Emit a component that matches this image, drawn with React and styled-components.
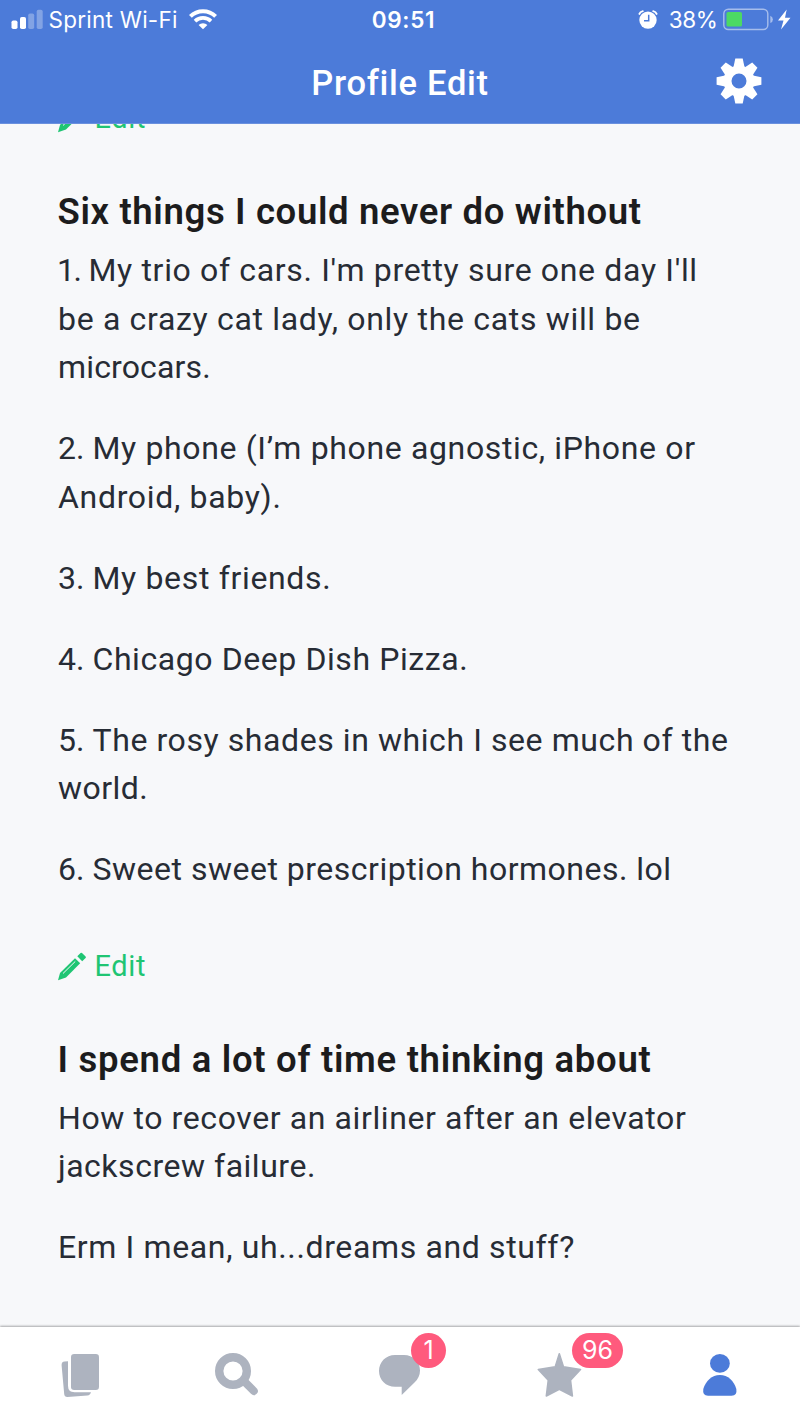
import React from "react"
import styled, { createGlobalStyle } from "styled-components"

const colors = {
  blue: "#4c7bd9",
  page: "#f7f8fa",
  heading: "#1c1c1d",
  text: "#272c35",
  green: "#1fc573",
  grey: "#adb3bf",
  pink: "#ff5a7d",
}

const GlobalStyle = createGlobalStyle`
  * {
    box-sizing: border-box;
  }
  body {
    margin: 0;
    background: ${colors.page};
    font-family: Roboto, "Liberation Sans", sans-serif;
  }
  svg {
    display: block;
    flex: none;
    overflow: visible;
  }
`

const Screen = styled.div`
  display: flex;
  flex-direction: column;
  width: 800px;
  height: 1422px;
  overflow: hidden;
`

const Header = styled.header`
  flex: none;
  height: 124px;
  background: ${colors.blue};
  border-bottom: 1px solid #6a90de;
  color: #fff;
`

const StatusBar = styled.div`
  display: grid;
  grid-template-columns: 1fr auto 1fr;
  align-items: center;
  height: 40px;
  padding: 0 8px 0 11px;
  font-family: Inter, "Liberation Sans", sans-serif;
  font-size: 22.5px;
  line-height: 40px;
`

const StatusGroup = styled.div`
  display: flex;
  align-items: center;
  justify-content: ${props => (props.end ? "flex-end" : "flex-start")};
`

const Carrier = styled.span`
  margin: 0 11px 0 5.5px;
  letter-spacing: 0.25px;
`

const Clock = styled.span`
  padding-left: 4px;
  font-weight: 560;
  letter-spacing: 0.7px;
`

const Percent = styled.span`
  margin: 0 5.5px 0 11px;
  letter-spacing: -0.4px;
`

const TitleBar = styled.div`
  display: grid;
  grid-template-columns: 1fr auto 1fr;
  align-items: center;
  height: 83px;
  padding: 0 38px;
`

const Title = styled.h1`
  grid-column: 2;
  margin: 0;
  padding-top: 2px;
  font-size: 34.5px;
  font-weight: 550;
  line-height: 82px;
  letter-spacing: 0.7px;
`

const Settings = styled.div`
  justify-self: end;
  padding-bottom: 2px;
`

const Content = styled.main`
  flex: 1;
  min-height: 0;
  overflow: hidden;
  padding-left: 58px;
`

const EditLink = styled.div`
  display: flex;
  align-items: center;
  height: 40px;
  margin-top: ${props => props.offset}px;
  color: ${colors.green};
  font-size: 29px;
  line-height: 40px;
  letter-spacing: 0.6px;
  span {
    margin-left: 8.5px;
  }
`

const Heading = styled.h2`
  margin: 50px 0 10px -0.5px;
  color: ${colors.heading};
  font-size: 36.5px;
  font-weight: 600;
  line-height: 48px;
  white-space: nowrap;
  letter-spacing: ${props => props.tracking}px;
`

const Paragraph = styled.p`
  margin: 0;
  color: ${colors.text};
  font-size: 32px;
  line-height: 48.5px;
  & + & {
    margin-top: 32.5px;
  }
`

const Line = styled.span`
  display: block;
  white-space: nowrap;
  letter-spacing: ${props => props.tracking}px;
`

// "1." to "6." sit closer to the text than a full space
const Numeral = styled.span`
  display: inline-block;
  width: ${props => (props.narrow ? 31.5 : 34.5)}px;
  margin-left: ${props => (props.narrow ? -1 : 0)}px;
  letter-spacing: ${props => (props.narrow ? -1.5 : 0)}px;
`

const TabBar = styled.nav`
  flex: none;
  display: grid;
  grid-template-columns: repeat(5, 1fr);
  align-items: center;
  justify-items: center;
  height: 95px;
  padding-top: 1px;
  background: #fff;
  box-shadow: 0 -1px 2px rgba(0, 0, 0, 0.32);
  z-index: 1;
`

const Tab = styled.div`
  position: relative;
  color: ${props => (props.active ? colors.blue : colors.grey)};
`

const Badge = styled.span`
  position: absolute;
  top: -18px;
  left: ${props => (props.wide ? 36 : 35)}px;
  height: 35px;
  min-width: 35px;
  padding: 0 ${props => (props.wide ? 10 : 0)}px;
  border-radius: 18px;
  background: ${colors.pink};
  color: #fff;
  font-family: Inter, "Liberation Sans", sans-serif;
  font-size: 25px;
  font-weight: 400;
  line-height: 35px;
  text-align: center;
`

const SignalIcon = () => (
  <svg width="32" height="20" viewBox="0 0 32 20" fill="#fff">
    <rect x="0.5" y="10.5" width="6" height="8.5" rx="1.8" />
    <rect x="9" y="7" width="6" height="12" rx="1.8" />
    <rect x="17.2" y="3.5" width="6" height="15.5" rx="1.8" opacity="0.3" />
    <rect x="25.7" y="-0.2" width="6" height="19.2" rx="1.8" opacity="0.3" />
  </svg>
)

const WifiIcon = () => (
  <svg width="28" height="20" viewBox="0 0 28 20" fill="none">
    <path d="M1.4 6.4a18 18 0 0 1 25.2 0" stroke="#fff" strokeWidth="4" />
    <path d="M6 11.1a11.5 11.5 0 0 1 16 0" stroke="#fff" strokeWidth="3.6" />
    <path d="M9.6 15a6.3 6.3 0 0 1 8.8 0L14 19.3z" fill="#fff" />
  </svg>
)

const AlarmIcon = () => (
  <svg width="20" height="20" viewBox="0 0 20 20" fill="none">
    <circle cx="10" cy="10.1" r="8.7" fill="#fff" />
    <path
      d="M1.4 3.9Q2.2 1.7 4.8 1.1M18.6 3.9Q17.8 1.7 15.2 1.1"
      stroke="#fff"
      strokeWidth="1.9"
      strokeLinecap="round"
    />
    <path d="M10.7 4.7v6H6" stroke={colors.blue} strokeWidth="1.5" />
  </svg>
)

const BatteryIcon = () => (
  <svg width="53" height="22" viewBox="0 0 53 22">
    <rect
      x="0.8"
      y="0.3"
      width="44"
      height="20.2"
      rx="4.5"
      fill="none"
      stroke="#fff"
      strokeOpacity="0.5"
      strokeWidth="1.4"
    />
    <rect x="3.5" y="3" width="15.5" height="14.6" rx="1.6" fill="#4cd964" />
    <path d="M47.3 6.7q2.6 1 2.6 3.7t-2.6 3.7z" fill="#fff" opacity="0.5" />
  </svg>
)

const BoltIcon = () => (
  <svg width="16" height="22" viewBox="0 0 16 22" fill="#fff">
    <path d="M10.7.5 2 11.6h5.5L5 20.5l9.500-11.700H9z" />
  </svg>
)

const GearIcon = () => (
  <svg width="46" height="46" viewBox="-23 -23 46 46" fill="#fff">
    {[0, 45, 90, 135, 180, 225, 270, 315].map(angle => (
      <path
        key={angle}
        d="M-3.7-22.4h7.4L5.5-14h-11z"
        transform={`rotate(${angle})`}
      />
    ))}
    <circle r="11.5" fill="none" stroke="#fff" strokeWidth="8" />
  </svg>
)

const PencilIcon = () => (
  <svg width="28" height="28" viewBox="0 0 28 28" fill="currentColor">
    <path d="M22.6 1q.7-.7 1.4 0l3.6 3.5q.7.7 0 1.4L24.2 9.2 19.3 4.3z" />
    <path d="M17 6.200l5.200 5.100L8 25.600 0 28.200 2 20.900z" />
    <path
      d="M5.3 21.2 17 9.7"
      stroke={colors.page}
      strokeWidth="1"
      strokeLinecap="round"
    />
  </svg>
)

const TabIcon = ({ children }) => (
  <svg width="48" height="48" viewBox="0 0 48 48" fill="currentColor">
    {children}
  </svg>
)

const CardsIcon = () => (
  <TabIcon>
    <rect x="15" y="3" width="28" height="36" rx="3.2" />
    <path d="M12 10.3v24.5q0 6.5 6.5 6.5H35q-.8 3-3.6 3.2L11.4 46q-3 0-3.2-3L5.6 14.2q-.2-3.4 3-3.7z" />
  </TabIcon>
)

const SearchIcon = () => (
  <TabIcon>
    <g fill="none" stroke="currentColor" strokeLinecap="round">
      <circle cx="17" cy="20" r="13.8" strokeWidth="8.4" />
      <path d="M29 31.2l8.8 8.8" strokeWidth="8" />
    </g>
  </TabIcon>
)

const ChatIcon = () => (
  <TabIcon>
    <path d="M19 4h9c9 0 16 6.6 16 15.5 0 5-2 8.6-5.5 12L25.7 43.9v-8.2H19C10 35.700 3 28.8 3 19.900S10 4 19 4z" />
  </TabIcon>
)

const StarIcon = () => (
  <TabIcon>
    <path
      d="M23.3 2.8 27.5 15.9 44.5 18.5 34.5 29.1 36.4 45 23.3 38.2 10.3 45 12.3 29.1 2.3 18.5 19.2 15.9z"
      stroke="currentColor"
      strokeWidth="1.6"
      strokeLinejoin="round"
    />
  </TabIcon>
)

const PersonIcon = () => (
  <TabIcon>
    <ellipse cx="23.9" cy="12.4" rx="9.9" ry="9.3" />
    <path d="M23.9 24C32 24 38 30 40.3 38q1.2 6.7-4.8 6.7H12q-5.7 0-4.7-6.7C9.8 30 15.8 24 23.9 24z" />
  </TabIcon>
)

// each line is [text, letter spacing]
const sections = [
  {
    title: "Six things I could never do without",
    tracking: 0.65,
    paragraphs: [
      [
        ["1. My trio of cars. I'm pretty sure one day I'll", 0.66],
        ["be a crazy cat lady, only the cats will be", 0.68],
        ["microcars.", 0.15],
      ],
      [
        ["2. My phone (I’m phone agnostic, iPhone or", 0.64],
        ["Android, baby).", 0.68],
      ],
      [["3. My best friends.", 0.66]],
      [["4. Chicago Deep Dish Pizza.", 0.58]],
      [
        ["5. The rosy shades in which I see much of the", 0.58],
        ["world.", 0.45],
      ],
      [["6. Sweet sweet prescription hormones. lol", 0.5]],
    ],
    editable: true,
  },
  {
    title: "I spend a lot of time thinking about",
    tracking: 0.71,
    paragraphs: [
      [
        ["How to recover an airliner after an elevator", 0.6],
        ["jackscrew failure.", 0.52],
      ],
      [["Erm I mean, uh...dreams and stuff?", 0.64]],
    ],
  },
]

const tabs = [
  { name: "cards", Icon: CardsIcon },
  { name: "search", Icon: SearchIcon },
  { name: "messages", Icon: ChatIcon, badge: "1" },
  { name: "likes", Icon: StarIcon, badge: "96" },
  { name: "profile", Icon: PersonIcon, active: true },
]

const Edit = ({ offset }) => (
  <EditLink offset={offset}>
    <PencilIcon />
    <span>Edit</span>
  </EditLink>
)

const TextLine = ({ text, tracking }) => {
  const numbered = text.match(/^(\d\.) (.*)$/)

  return (
    <Line tracking={tracking}>
      {numbered ? (
        <>
          <Numeral narrow={numbered[1] === "1."}>{numbered[1]} </Numeral>
          {numbered[2]}
        </>
      ) : (
        text
      )}
    </Line>
  )
}

const App = () => {
  return (
    <>
      <GlobalStyle />
      <Screen>
        <Header>
          <StatusBar>
            <StatusGroup>
              <SignalIcon />
              <Carrier>Sprint Wi-Fi</Carrier>
              <WifiIcon />
            </StatusGroup>
            <Clock>09:51</Clock>
            <StatusGroup end>
              <AlarmIcon />
              <Percent>38%</Percent>
              <BatteryIcon />
              <BoltIcon />
            </StatusGroup>
          </StatusBar>
          <TitleBar>
            <Title>Profile Edit</Title>
            <Settings>
              <GearIcon />
            </Settings>
          </TitleBar>
        </Header>
        <Content>
          <Edit offset={-26} />
          {sections.map(({ title, tracking, paragraphs, editable }) => (
            <section key={title}>
              <Heading tracking={tracking}>{title}</Heading>
              {paragraphs.map((lines, i) => (
                <Paragraph key={i}>
                  {lines.map(([text, spacing]) => (
                    <TextLine key={text} text={text} tracking={spacing} />
                  ))}
                </Paragraph>
              ))}
              {editable ? <Edit offset={52} /> : null}
            </section>
          ))}
        </Content>
        <TabBar>
          {tabs.map(({ name, Icon, badge, active }) => (
            <Tab key={name} active={active}>
              <Icon />
              {badge ? <Badge wide={badge.length > 1}>{badge}</Badge> : null}
            </Tab>
          ))}
        </TabBar>
      </Screen>
    </>
  )
}

export default App
